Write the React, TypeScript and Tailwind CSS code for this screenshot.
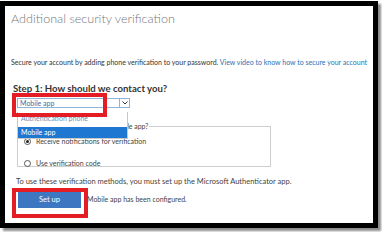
import React from "react";

const font = { fontFamily: 'Lato, "Noto Sans", sans-serif' };

export default function App() {
  return (
    <div className="w-[382px] h-[232px] bg-white overflow-hidden" style={font}>
      <div className="relative w-[378px] h-[227px] mt-[1px] border-[5px] border-black bg-white shadow-[3px_3px_2px_rgba(0,0,0,0.45)] pl-[6px] pr-[2px]">
        <div className="pt-[4px] text-[12.6px] font-light text-[#777] leading-[18px]">
          Additional security verification
        </div>
        <div className="mt-[29px] text-[7px] leading-[10px] text-[#333] whitespace-nowrap">
          Secure your account by adding phone verification to your password.{" "}
          <span className="text-[#1f73b7]">View video to know how to secure your account</span>
        </div>
        <div className="mt-[15px] pl-[2px] text-[9.6px] font-bold leading-[13px] text-[#333]">
          Step 1: How should we contact you?
        </div>
        <div className="mt-[3px] ml-[6px] flex w-[113px] h-[10px]">
          <div className="flex-1 border border-[#8fb3d9] text-[7px] leading-[8px] text-[#3a6fa5] pl-[2px]">
            Mobile app
          </div>
          <div className="w-[10px] border border-[#8fb3d9] border-l-0 flex items-center justify-center">
            <svg width="6" height="4" viewBox="0 0 6 4">
              <path d="M0.5 0.5 L3 3 L5.5 0.5" stroke="#333" strokeWidth="1" fill="none" />
            </svg>
          </div>
        </div>
        <fieldset className="mt-[14px] ml-[6px] w-[254px] h-[45px] border border-[#cfcfcf] px-[6px]">
          <legend className="text-[6.9px] leading-[8px] text-[#444] px-[1px]">
            How do you want to use the mobile app?
          </legend>
          <div className="flex items-center gap-[5px] mt-[7px] text-[7px] text-[#444] leading-[9px]">
            <span className="w-[7px] h-[7px] rounded-full border border-[#555] flex items-center justify-center">
              <span className="w-[3px] h-[3px] rounded-full bg-[#222]" />
            </span>
            Receive notifications for verification
          </div>
          <div className="flex items-center gap-[5px] mt-[13px] text-[7px] text-[#444] leading-[9px]">
            <span className="w-[7px] h-[7px] rounded-full border border-[#555]" />
            Use verification code
          </div>
        </fieldset>
        <div className="mt-[10px] pl-[5px] text-[7.5px] leading-[9px] text-[#444] whitespace-nowrap">
          To use these verification methods, you must set up the Microsoft Authenticator app.
        </div>
        <div className="mt-[5px] ml-[7px] flex items-center gap-[6px]">
          <div className="w-[63px] h-[17px] bg-[#3d77c2] text-white text-[7.5px] flex items-center justify-center">
            Set up
          </div>
          <span className="text-[7px] text-[#444]">Mobile app has been configured.</span>
        </div>

        {/* dropdown list overlay */}
        <div className="absolute left-[12px] top-[106px] w-[111px] bg-white border border-[#c8c8c8] border-t-0">
          <div className="h-[15px] text-[7px] leading-[10px] text-[#6c8fb3] pl-[3px] overflow-hidden">
            <div className="mt-[1px]">Authentication phone</div>
          </div>
          <div className="h-[11px] bg-[#1e78d2] text-white text-[7px] leading-[11px] pl-[3px]">Mobile app</div>
        </div>

        {/* red highlight boxes */}
        <div className="absolute left-[7px] top-[87px] w-[95px] h-[24px] border-[4px] border-[#e41d24]" />
        <div className="absolute left-[7px] top-[182px] w-[76px] h-[30px] border-[4px] border-[#e41d24]" />
      </div>
    </div>
  );
}
